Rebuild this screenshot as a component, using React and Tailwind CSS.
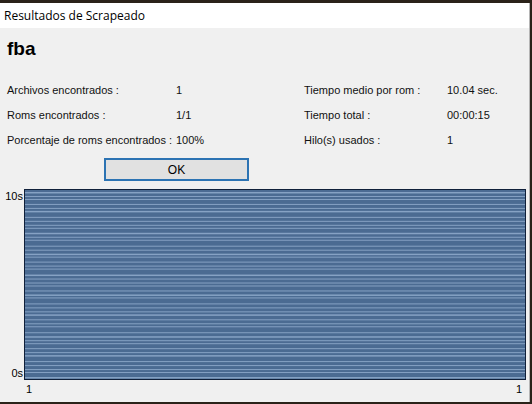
import React from 'react';

const stats = [
  ['Archivos encontrados :', '1', 'Tiempo medio por rom :', '10.04 sec.'],
  ['Roms encontrados :', '1/1', 'Tiempo total :', '00:00:15'],
  ['Porcentaje de roms encontrados :', '100%', 'Hilo(s) usados :', '1'],
];

function Stripes() {
  // thin light lines over a steel-blue fill, like the bars of the original chart
  const lines = [];
  let y = 2;
  let i = 0;
  while (y < 190) {
    lines.push(<rect key={i} x="0" y={y} width="500" height={i % 5 === 0 ? 1.5 : 1} fill="#86a2c4" />);
    y += [4, 3, 5, 4, 3, 6, 4][i % 7];
    i++;
  }
  return (
    <svg width="100%" height="100%" viewBox="0 0 500 190" preserveAspectRatio="none" className="block">
      <rect x="0" y="0" width="500" height="190" fill="#4b6b92" />
      {lines}
    </svg>
  );
}

export default function App() {
  return (
    <div className="w-[532px] h-[404px] bg-[#2a2219] flex flex-col overflow-hidden" style={{ fontFamily: '"Liberation Sans", Arial, sans-serif' }}>
      <div className="h-[3px] shrink-0" />
      <div className="flex-1 flex flex-col bg-[#f0f0f0] mr-[2px] border-r border-[#b5b5b5]">
        <div className="h-[25px] bg-white flex items-center pl-[4px] text-[12px] text-black" style={{ fontFamily: '"Open Sans", "Noto Sans", sans-serif' }}>
          Resultados de Scrapeado
        </div>
        <div className="pl-[7px] pt-[9px] text-[19px] font-bold leading-[24px] text-black">fba</div>
        <div className="mt-[23px] flex flex-col gap-[12px] text-[11px] text-[#111]">
          {stats.map((r, i) => (
            <div key={i} className="flex h-[13px] items-center">
              <div className="w-[176px] pl-[7px]">{r[0]}</div>
              <div className="w-[128px]">{r[1]}</div>
              <div className="w-[143px]">{r[2]}</div>
              <div>{r[3]}</div>
            </div>
          ))}
        </div>
        <div className="mt-[11px] ml-[104px] w-[145px] h-[23px] border-2 border-[#2c73b3] bg-[#e1e1e1] flex items-center justify-center text-[12px] text-black">
          OK
        </div>
        <div className="mt-[8px] flex text-[11px] text-black">
          <div className="w-[24px] flex flex-col justify-between items-end pr-[1px] h-[191px]">
            <span className="leading-[14px]">10s</span>
            <span className="leading-[14px]">0s</span>
          </div>
          <div className="w-[502px] h-[191px] border-[1.5px] border-[#10203a]">
            <Stripes />
          </div>
        </div>
        <div className="flex justify-between pl-[26px] pr-[7px] mt-[1px] text-[11px] text-black">
          <span>1</span>
          <span>1</span>
        </div>
      </div>
      <div className="h-[2px] shrink-0" />
    </div>
  );
}
